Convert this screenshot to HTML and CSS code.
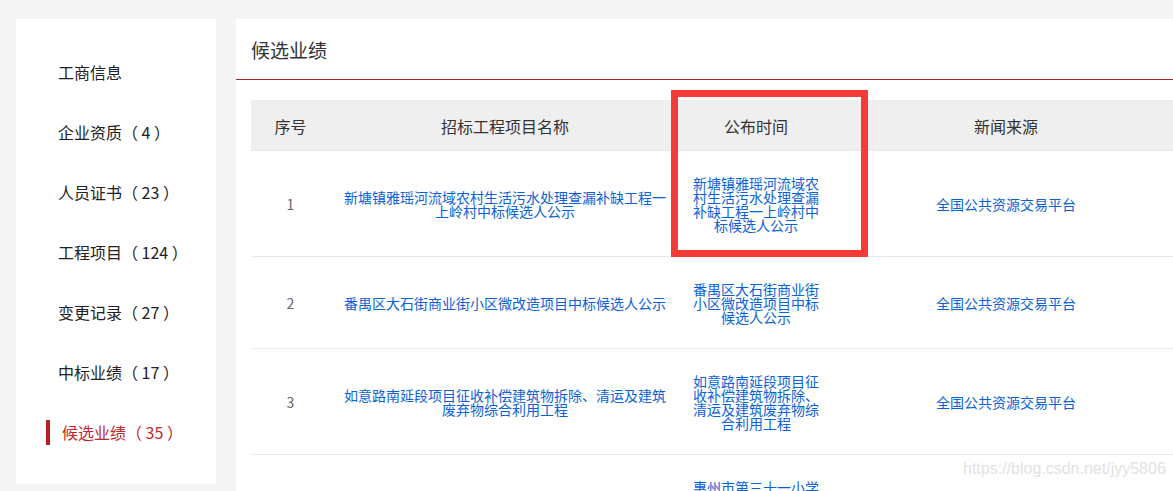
FILE: index.html
```html
<!DOCTYPE html>
<html lang="zh-CN">
<head>
<meta charset="utf-8">
<title>候选业绩</title>
<link rel="stylesheet" href="styles.css">
</head>
<body>
<div class="page">
  <aside class="sidebar">
    <ul class="menu">
      <li class="menu-item"><span class="menu-label">工商信息</span></li>
      <li class="menu-item"><span class="menu-label">企业资质（ 4 ）</span></li>
      <li class="menu-item"><span class="menu-label">人员证书（ 23 ）</span></li>
      <li class="menu-item"><span class="menu-label">工程项目（ 124 ）</span></li>
      <li class="menu-item"><span class="menu-label">变更记录（ 27 ）</span></li>
      <li class="menu-item"><span class="menu-label">中标业绩（ 17 ）</span></li>
      <li class="menu-item active"><span class="menu-label">候选业绩（ 35 ）</span></li>
    </ul>
  </aside>
  <main class="panel">
    <h2 class="panel-title">候选业绩</h2>
    <div class="table-wrap">
      <table class="grid">
        <colgroup>
          <col class="c-no"><col class="c-name"><col class="c-time"><col class="c-src"><col class="c-extra">
        </colgroup>
        <thead>
          <tr><th>序号</th><th>招标工程项目名称</th><th>公布时间</th><th>新闻来源</th><th></th></tr>
        </thead>
        <tbody>
          <tr>
            <td class="no">1</td>
            <td><a class="lnk name">新塘镇雅瑶河流域农村生活污水处理查漏补缺工程一上岭村中标候选人公示</a></td>
            <td><a class="lnk time">新塘镇雅瑶河流域农村生活污水处理查漏补缺工程一上岭村中标候选人公示</a></td>
            <td><a class="lnk">全国公共资源交易平台</a></td>
            <td></td>
          </tr>
          <tr>
            <td class="no">2</td>
            <td><a class="lnk name">番禺区大石街商业街小区微改造项目中标候选人公示</a></td>
            <td><a class="lnk time">番禺区大石街商业街小区微改造项目中标候选人公示</a></td>
            <td><a class="lnk">全国公共资源交易平台</a></td>
            <td></td>
          </tr>
          <tr>
            <td class="no">3</td>
            <td><a class="lnk name">如意路南延段项目征收补偿建筑物拆除、清运及建筑废弃物综合利用工程</a></td>
            <td><a class="lnk time">如意路南延段项目征收补偿建筑物拆除、清运及建筑废弃物综合利用工程</a></td>
            <td><a class="lnk">全国公共资源交易平台</a></td>
            <td></td>
          </tr>
          <tr>
            <td class="no">4</td>
            <td><a class="lnk name">惠州市第三十一小学新建教学综合楼工程施工总承包项目第一标段（重新招标）中标候选人公示</a></td>
            <td><a class="lnk time">惠州市第三十一小学新建教学综合楼工程施工总承包项目第一标段（重新招标）中标候选人公示</a></td>
            <td><a class="lnk">全国公共资源交易平台</a></td>
            <td></td>
          </tr>
        </tbody>
      </table>
      <div class="mark-box"></div>
    </div>
  </main>
</div>
<div class="watermark">https://blog.csdn.net/jyy5806</div>
</body>
</html>
```

FILE: styles.css
```css
html, body {
  margin: 0;
  padding: 0;
}
body {
  width: 1173px;
  height: 491px;
  overflow: hidden;
  background: #f4f4f4;
  font-family: "Noto Sans CJK SC", "Noto Sans", sans-serif;
  color: #333;
  position: relative;
}
.page {
  display: flex;
  align-items: flex-start;
  gap: 20px;
  padding: 19px 0 0 16px;
  width: 1300px;
}
.sidebar {
  width: 200px;
  flex: none;
  background: #fff;
  padding: 23px 0 22px;
}
.menu {
  list-style: none;
  margin: 0;
  padding: 0;
}
.menu-item {
  height: 60px;
  display: flex;
  align-items: center;
  padding-left: 42px;
  font-size: 16px;
  color: #222;
}
.menu-label {
  line-height: 25px;
  white-space: nowrap;
}
.menu-item.active {
  padding-left: 30px;
}
.menu-item.active .menu-label {
  border-left: 4px solid #bb1d24;
  padding-left: 12px;
  color: #c0262d;
}
.panel {
  flex: 1;
  background: #fff;
  min-height: 520px;
}
.panel-title {
  margin: 0;
  height: 60px;
  line-height: 61px;
  padding-left: 15px;
  font-size: 19px;
  font-weight: normal;
  color: #333;
  border-bottom: 1px solid #a8262b;
}
.table-wrap {
  position: relative;
  padding: 20px 0 0 15px;
}
.grid {
  border-collapse: collapse;
  table-layout: fixed;
  width: 1029px;
}
.c-no { width: 79px; }
.c-name { width: 350px; }
.c-time { width: 152px; }
.c-src { width: 348px; }
.c-extra { width: 100px; }
.grid th {
  background: #efefef;
  height: 50px;
  padding: 2px 0 0;
  box-sizing: border-box;
  font-size: 16px;
  font-weight: normal;
  color: #333;
  text-align: center;
  border-bottom: 1px solid #e6e8f0;
}
.grid td {
  padding: 25px 10px 24px;
  text-align: center;
  vertical-align: middle;
  font-size: 14px;
  line-height: 14px;
  border-bottom: 1px solid #e8e9ef;
}
.grid td.no {
  color: #666;
  padding: 25px 0 24px;
}
.lnk {
  color: #0b62d6;
  text-decoration: none;
}
.mark-box {
  position: absolute;
  left: 435px;
  top: 10px;
  width: 183px;
  height: 153px;
  border: 7px solid #f53a3a;
}
.watermark {
  position: absolute;
  left: 963px;
  top: 460px;
  font-family: "Liberation Sans", Arial, sans-serif;
  font-size: 16px;
  color: #e2e2e2;
  white-space: nowrap;
}
```
